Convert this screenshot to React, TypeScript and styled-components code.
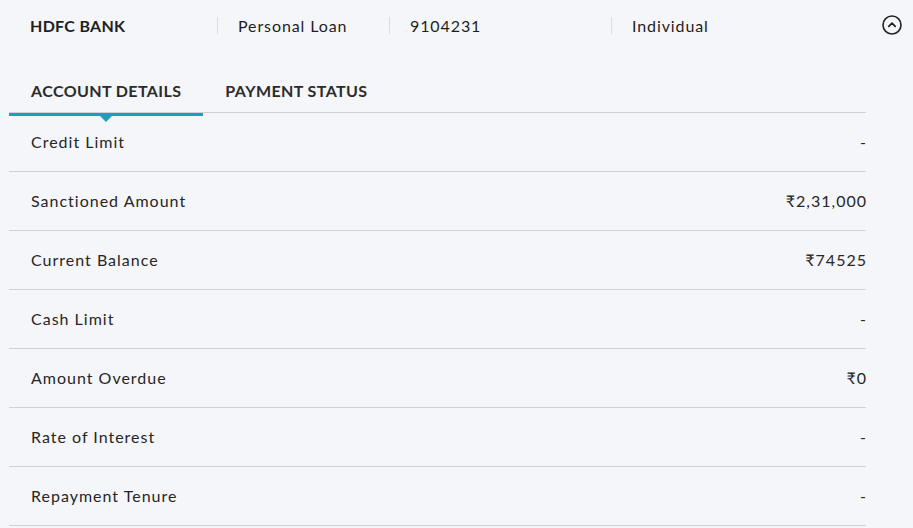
import React, { useState } from 'react';
import styled, { createGlobalStyle } from 'styled-components';

const GlobalStyle = createGlobalStyle`
  html, body {
    margin: 0;
    padding: 0;
    background: #f5f6fa;
  }
  body {
    font-family: 'Lato', 'Open Sans', sans-serif;
    color: #222;
  }
`;

const Page = styled.div`
  width: 913px;
  height: 528px;
  overflow: hidden;
  background: #f5f6fa;
`;

const Header = styled.div`
  display: flex;
  align-items: center;
  height: 52px;
  padding-left: 30px;
  padding-right: 10px;
  padding-bottom: 2px;
  box-sizing: border-box;
`;

const HeaderCell = styled.div<{ $width: number; $bold?: boolean }>`
  width: ${(p) => p.$width}px;
  font-size: 16px;
  font-weight: ${(p) => (p.$bold ? 700 : 400)};
  letter-spacing: ${(p) => (p.$bold ? '0.3px' : '0.9px')};
  color: #1e1e1e;
  display: flex;
  align-items: center;
  gap: 20px;
  white-space: nowrap;
`;

const Separator = styled.span`
  display: block;
  flex: none;
  width: 1px;
  height: 17px;
  background: #dcdde2;
`;

const ToggleButton = styled.button`
  margin-left: auto;
  border: none;
  background: none;
  padding: 0;
  width: 22px;
  height: 22px;
  display: flex;
  align-items: center;
  justify-content: center;
  cursor: pointer;
`;

const Body = styled.div`
  width: 857px;
  margin-left: 9px;
`;

const Tabs = styled.div`
  display: flex;
  border-bottom: 1px solid #cfd1d7;
  margin-top: 22px;
`;

const Tab = styled.div<{ $active?: boolean }>`
  position: relative;
  padding: 0 22px 5px;
  height: 38px;
  box-sizing: border-box;
  display: flex;
  align-items: center;
  font-size: 16px;
  font-weight: 700;
  letter-spacing: 0.4px;
  color: #2b2b2b;
  white-space: nowrap;
  cursor: pointer;
  ${(p) =>
    p.$active &&
    `
    &:after {
      content: '';
      position: absolute;
      left: 0;
      right: 0;
      bottom: -4px;
      height: 3px;
      background: #1aa1b9;
    }
    &:before {
      content: '';
      position: absolute;
      left: 50%;
      bottom: -10px;
      margin-left: -7px;
      border-left: 7px solid transparent;
      border-right: 7px solid transparent;
      border-top: 7px solid #1aa1b9;
    }
  `}
`;

const Row = styled.div`
  display: flex;
  align-items: center;
  justify-content: space-between;
  height: 59px;
  box-sizing: border-box;
  padding: 0 0 2px 22px;
  border-bottom: 1px solid #cfd1d7;
  font-size: 16px;
  letter-spacing: 1px;
  color: #262626;
`;

const Value = styled.span`
  text-align: right;
  margin-right: -1px;
`;

const ChevronCircle = () => (
  <svg width="22" height="22" viewBox="0 0 22 22" fill="none">
    <circle cx="11" cy="11" r="9" stroke="#222" strokeWidth="1.6" />
    <path d="M7.8 12.3 L11 9.2 L14.2 12.3" stroke="#222" strokeWidth="1.8" strokeLinecap="round" strokeLinejoin="round" />
  </svg>
);

const rows = [
  { label: 'Credit Limit', value: '-' },
  { label: 'Sanctioned Amount', value: '₹2,31,000' },
  { label: 'Current Balance', value: '₹74525' },
  { label: 'Cash Limit', value: '-' },
  { label: 'Amount Overdue', value: '₹0' },
  { label: 'Rate of Interest', value: '-' },
  { label: 'Repayment Tenure', value: '-' },
];

const App: React.FC = () => {
  const [tab, setTab] = useState(0);

  return (
    <Page>
      <GlobalStyle />
      <Header>
        <HeaderCell $width={187} $bold>
          HDFC BANK
        </HeaderCell>
        <HeaderCell $width={172}>
          <Separator />
          Personal Loan
        </HeaderCell>
        <HeaderCell $width={222}>
          <Separator />
          9104231
        </HeaderCell>
        <HeaderCell $width={200}>
          <Separator />
          Individual
        </HeaderCell>
        <ToggleButton aria-label="collapse">
          <ChevronCircle />
        </ToggleButton>
      </Header>
      <Body>
        <Tabs>
          <Tab $active={tab === 0} onClick={() => setTab(0)}>
            ACCOUNT DETAILS
          </Tab>
          <Tab $active={tab === 1} onClick={() => setTab(1)}>
            PAYMENT STATUS
          </Tab>
        </Tabs>
        {rows.map((row) => (
          <Row key={row.label}>
            <span>{row.label}</span>
            <Value>{row.value}</Value>
          </Row>
        ))}
      </Body>
    </Page>
  );
};

export default App;
